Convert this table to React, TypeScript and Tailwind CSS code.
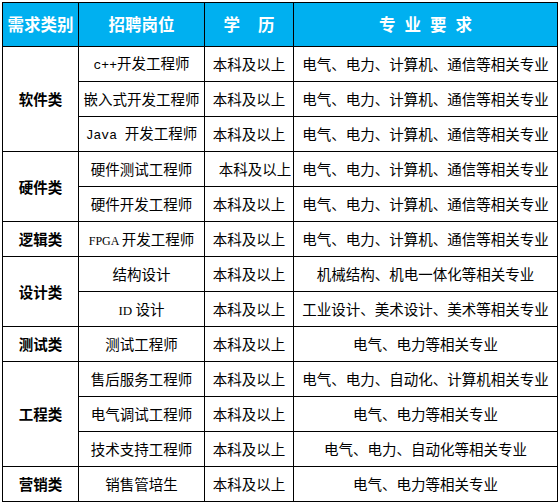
const ALL = "电气、电力、计算机、通信等相关专业";

type Row = {
  category?: string;
  span?: number;
  job: React.ReactNode;
  degree: string;
  major: string;
  degreeShift?: boolean;
};

const rows: Row[] = [
  {
    category: "软件类",
    span: 3,
    job: (
      <>
        <span className="font-['Liberation_Mono',monospace] text-[13px]">c++</span>开发工程师
      </>
    ),
    degree: "本科及以上",
    major: ALL,
  },
  { job: "嵌入式开发工程师", degree: "本科及以上", major: ALL },
  {
    job: (
      <>
        <span className="font-['Liberation_Mono',monospace] text-[13px]">Java </span>开发工程师
      </>
    ),
    degree: "本科及以上",
    major: ALL,
  },
  { category: "硬件类", span: 2, job: "硬件测试工程师", degree: "本科及以上", major: ALL, degreeShift: true },
  { job: "硬件开发工程师", degree: "本科及以上", major: ALL },
  {
    category: "逻辑类",
    span: 1,
    job: (
      <>
        <span className="font-['Liberation_Serif',serif] text-[12px]">FPGA </span>开发工程师
      </>
    ),
    degree: "本科及以上",
    major: ALL,
  },
  { category: "设计类", span: 2, job: "结构设计", degree: "本科及以上", major: "机械结构、机电一体化等相关专业" },
  {
    job: (
      <>
        <span className="font-['Liberation_Serif',serif] text-[13px]">ID </span>设计
      </>
    ),
    degree: "本科及以上",
    major: "工业设计、美术设计、美术等相关专业",
  },
  { category: "测试类", span: 1, job: "测试工程师", degree: "本科及以上", major: "电气、电力等相关专业" },
  { category: "工程类", span: 3, job: "售后服务工程师", degree: "本科及以上", major: "电气、电力、自动化、计算机相关专业" },
  { job: "电气调试工程师", degree: "本科及以上", major: "电气、电力等相关专业" },
  { job: "技术支持工程师", degree: "本科及以上", major: "电气、电力、自动化等相关专业" },
  { category: "营销类", span: 1, job: "销售管培生", degree: "本科及以上", major: "电气、电力等相关专业" },
];

const cell = "border border-black text-center align-middle p-0 whitespace-nowrap overflow-hidden";

export default function App() {
  return (
    <div className="w-[560px] h-[504px] bg-white pt-[2px] pl-[2px] font-['Noto_Sans_CJK_SC',sans-serif] text-black">
      <table className="table-fixed border-collapse w-[555px]">
        <colgroup>
          <col className="w-[76px]" />
          <col className="w-[126px]" />
          <col className="w-[89px]" />
          <col className="w-[264px]" />
        </colgroup>
        <thead>
          <tr className="h-[44px] bg-[#00b0f0] text-white font-bold text-[16.5px]">
            <th className={cell}>需求类别</th>
            <th className={cell}>招聘岗位</th>
            <th className={cell}>
              学<span className="inline-block w-[18px]" />历
            </th>
            <th className={cell + " tracking-[9px]"}>
              <span className="pl-[9px]">专业要求</span>
            </th>
          </tr>
        </thead>
        <tbody className="text-[14.5px]">
          {rows.map((r, i) => (
            <tr key={i} className="h-[35px] bg-white">
              {r.category && (
                <td rowSpan={r.span} className={cell + " font-bold"}>
                  {r.category}
                </td>
              )}
              <td className={cell}>{r.job}</td>
              <td className={cell + (r.degreeShift ? " pl-[12px]" : "")}>{r.degree}</td>
              <td className={cell}>{r.major}</td>
            </tr>
          ))}
        </tbody>
      </table>
    </div>
  );
}
